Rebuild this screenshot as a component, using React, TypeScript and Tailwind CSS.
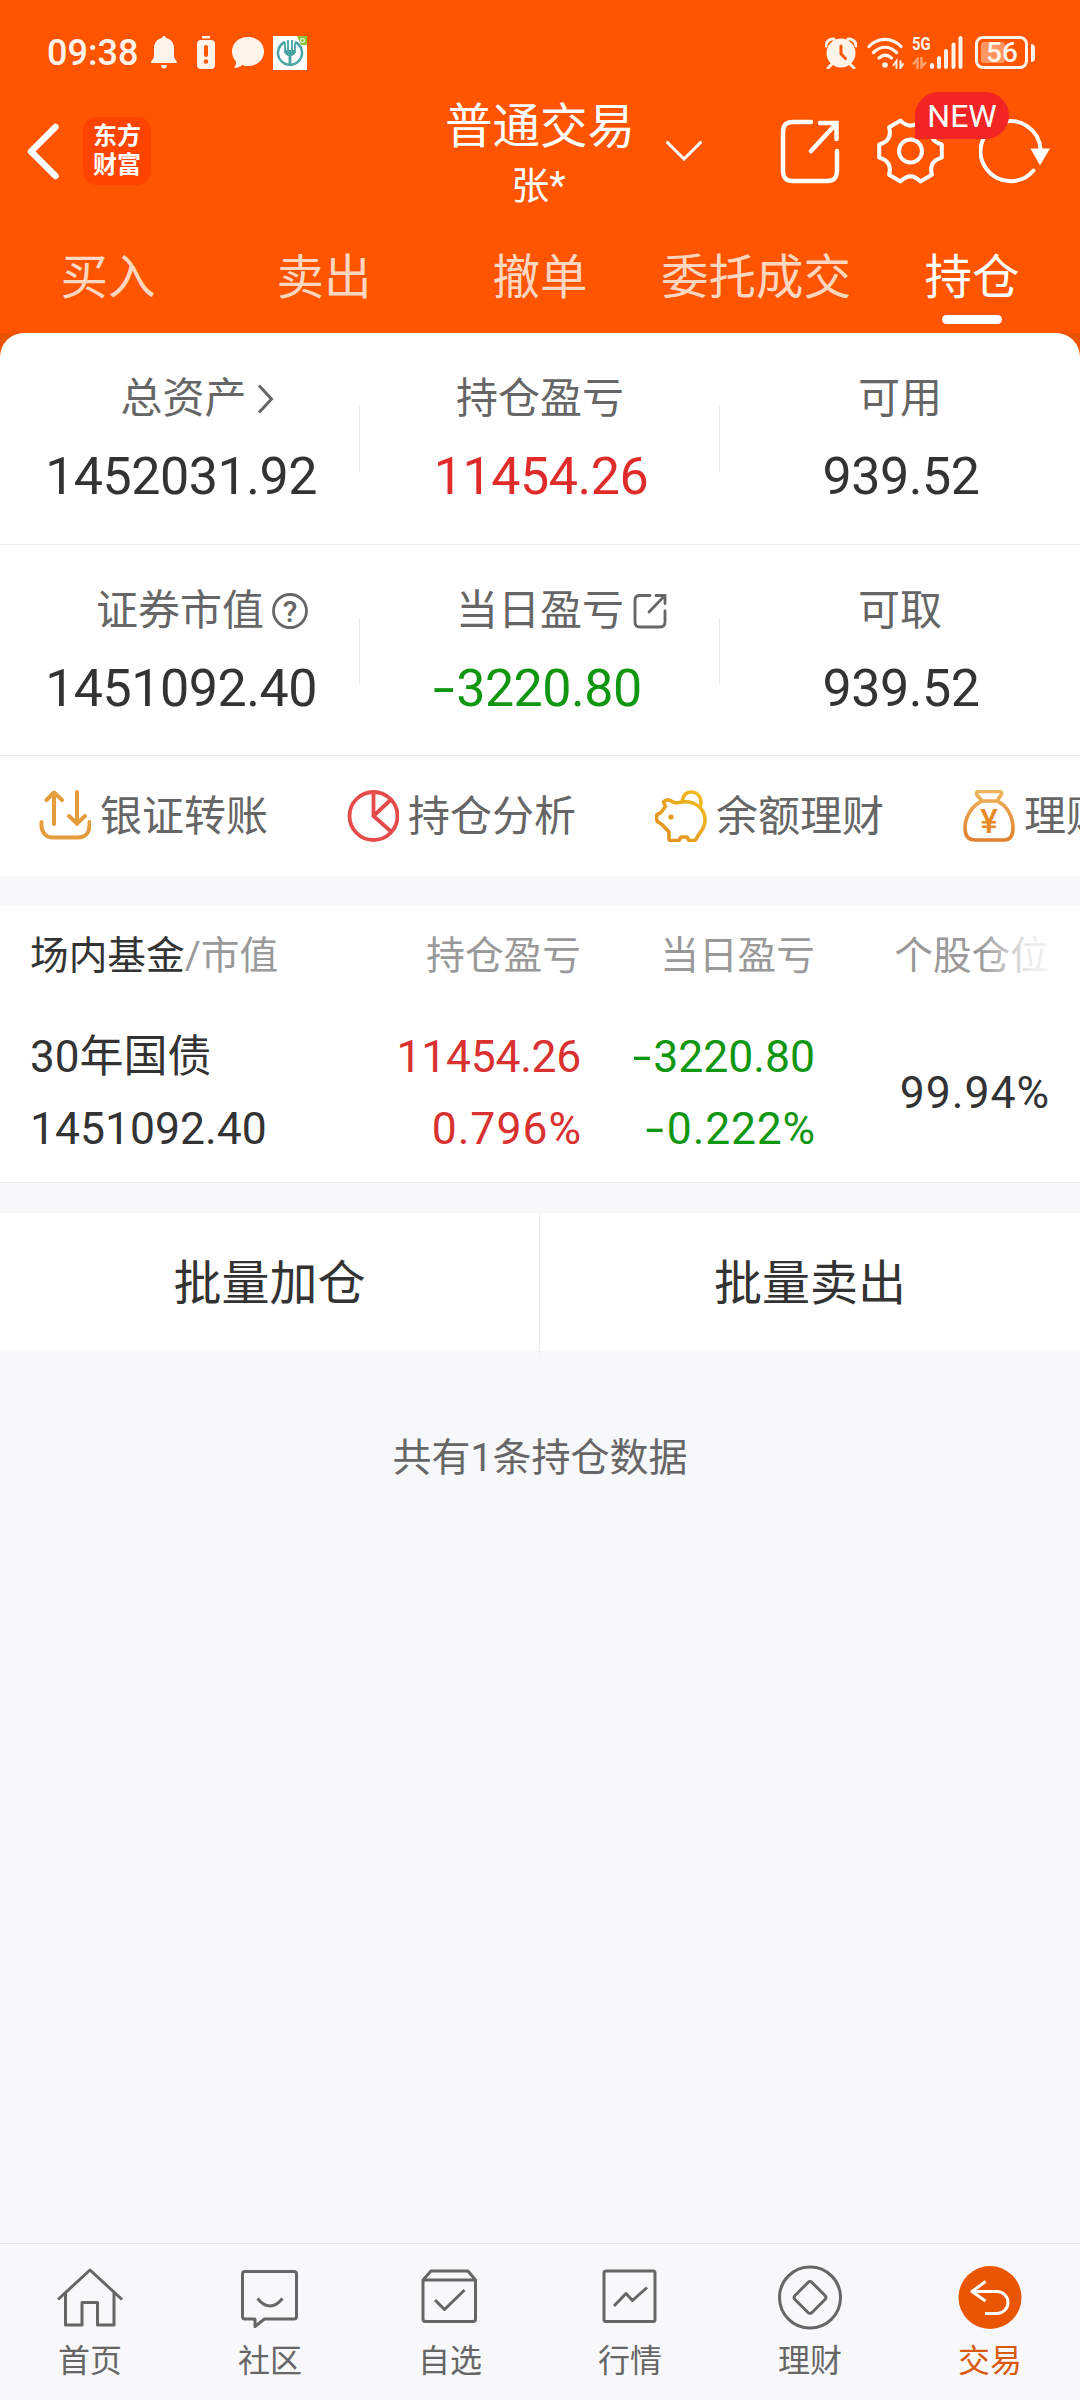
import type { ReactNode } from "react"
import clsx from "clsx"

const tabs = ["买入", "卖出", "撤单", "委托成交", "持仓"]

// 负数的减号单独拉宽
function Num({ value }: { value: string }) {
  if (!value.startsWith("-")) return <>{value}</>
  return (
    <>
      <span className="mr-[2px] inline-block origin-right scale-x-150">-</span>
      {value.slice(1)}
    </>
  )
}

function StatusBar() {
  return (
    <div className="flex h-[92px] items-center pl-[47px] pr-[45px] pt-[13px] text-[#fff3ea]">
      <span className="w-[104px] text-[36px] font-medium leading-none">09:38</span>
      <svg width="26" height="33" viewBox="0 0 26 33" fill="currentColor">
        <path d="M13 0c1.500 0 2 1 2 2 5 1 8 5 8 10v8c0 3 3 4 3 7H0c0-3 3-4 3-7v-8C3 7 6 3 11 2c0-1 .5-2 2-2zM10 29h6c0 2-1 3.500-3 3.500S10 31 10 29z" />
      </svg>
      <svg className="ml-[20px]" width="18" height="33" viewBox="0 0 18 33">
        <path fill="currentColor" d="M5 0h8v2.500H5zM4 4h10a4 4 0 0 1 4 4v21a4 4 0 0 1-4 4H4a4 4 0 0 1-4-4V8a4 4 0 0 1 4-4z" />
        <path d="M9 11v8" stroke="#ff5500" strokeWidth="4" strokeLinecap="round" />
        <circle cx="9" cy="25.500" r="2.200" fill="#ff5500" />
      </svg>
      <svg className="ml-[17px]" width="32" height="31" viewBox="0 0 32 31" fill="currentColor">
        <path d="M16 0c9 0 16 6 16 14.500S25 29 16 29c-2 0-4 0-5.500-1C8 30 5 31 2 31c1.500-2 2-4 2-6.500C1.500 22 0 18.500 0 14.500 0 6 7 0 16 0z" />
      </svg>
      <svg className="ml-[9px]" width="34" height="34" viewBox="0 0 34 34">
        <rect width="34" height="34" fill="#fff" />
        <path d="M24 0h10v9h-6z" fill="#8cc63f" />
        <circle cx="29.500" cy="4.500" r="2" fill="none" stroke="#fff" />
        <path d="M12 6A12 12 0 1 0 22 6" fill="none" stroke="#4aa5a5" strokeWidth="2.500" />
        <path d="M12 7v10M22 7v10M15 4v11M19 4v11" fill="none" stroke="#4aa5a5" strokeWidth="1.800" />
        <path d="M12 14h10v4l-3 2h-4l-3-2zM15.500 20h3v9h-3z" fill="#4aa5a5" />
      </svg>

      <div className="ml-auto flex items-center">
        <svg width="32" height="32" viewBox="0 0 32 32">
          <path d="M1 9a7 7 0 0 1 8-7M31 9a7 7 0 0 0-8-7M7 27l-4 4M25 27l4 4" stroke="currentColor" strokeWidth="3" fill="none" strokeLinecap="round" />
          <circle cx="16" cy="16" r="14.500" fill="currentColor" />
          <path d="M16 9v8l4.500 4.500" stroke="#ff5500" strokeWidth="3" fill="none" strokeLinecap="round" />
        </svg>
        <svg className="ml-[10px]" width="37" height="32" viewBox="0 0 37 32" fill="none" stroke="currentColor" strokeWidth="3.200" strokeLinecap="round">
          <path d="M2 9.500c9-9.500 23-9.500 32 0M6.500 15.500c7-7 16-7 23 0M12 21c4-3.500 8.500-3.500 12.500 0" />
          <circle cx="18" cy="28" r="2.800" fill="currentColor" stroke="none" />
          <path d="M29.500 31v-7l-3 4M33.500 24v7l2.500-4" strokeWidth="2" />
        </svg>
        <div className="ml-[8px] flex h-[33px] w-[18px] flex-col justify-between">
          <span className="origin-left scale-x-[.78] text-[19px] font-bold leading-[16px]">5G</span>
          <svg width="15" height="12" viewBox="0 0 15 12" fill="none" stroke="#ff9f6e" strokeWidth="2.500">
            <path d="M5.500 12V2L1 7.500M9.500 0v10l4.500-5" />
          </svg>
        </div>
        <svg width="33" height="33" viewBox="0 0 33 33" stroke="currentColor" strokeWidth="4" strokeLinecap="round">
          <path d="M2 29v2M9 22v9M16 15v16M23.500 8.500V31M30.500 2v29" />
        </svg>
        <div className="ml-[12px] flex h-[33px] w-[53px] items-center rounded-[8px] border-[3px] border-current p-[3px]">
          <div className="flex h-full w-[24px] items-center justify-start rounded-[3px] bg-[#ff9560] pl-[5px]">
            <span className="text-[28px] font-medium leading-none">56</span>
          </div>
        </div>
        <div className="ml-[3px] h-[18px] w-[4px] rounded-r bg-current" />
      </div>
    </div>
  )
}

function Header() {
  return (
    <div className="flex h-[118px] items-center text-white">
      <div className="flex w-[445px] items-center pl-[27px]">
        <svg width="32" height="57" viewBox="0 0 32 57" fill="none" stroke="currentColor" strokeWidth="6.500" strokeLinecap="round" strokeLinejoin="round">
          <path d="M28.500 4L4 28.500 28.500 53" />
        </svg>
        <div className="ml-[24px] flex h-[68px] w-[68px] flex-col items-center justify-center rounded-[14px] bg-[#ff4400] text-[24px] font-bold leading-[29px]">
          <span>东方</span>
          <span>财富</span>
        </div>
      </div>
      <div className="w-[187px] pt-[3px] text-center">
        <div className="whitespace-nowrap text-[47.500px] leading-[66px]">普通交易</div>
        <div className="text-[38px] leading-[52px]">张*</div>
      </div>
      <svg className="ml-[34px]" width="36" height="20" viewBox="0 0 36 20" fill="none" stroke="currentColor" strokeWidth="3" strokeLinecap="round">
        <path d="M1.500 1.500L18 18 34.500 1.500" />
      </svg>
      <svg className="ml-[78px]" width="60" height="65" viewBox="0 0 60 65" fill="none" stroke="currentColor" strokeWidth="4.500" strokeLinecap="round">
        <path d="M31 3H13C6 3 3 6 3 13v38c0 8 3 11 10 11h34c7 0 10-3 10-11V32M31 32L56 5M40 4h16.500v16" />
      </svg>
      <div className="relative ml-[37px]">
        <svg width="67" height="66" viewBox="-33.500 -33 67 66" fill="none" stroke="currentColor" strokeWidth="4" strokeLinejoin="round">
          <path d="M31.300-6.600V6.600Q17.800 10.300 21.400 23.800L9.900 30.400Q0 20.500-9.900 30.400L-21.400 23.800Q-17.800 10.300-31.300 6.600V-6.600Q-17.800-10.300-21.400-23.800L-9.900-30.400Q0-20.500 9.900-30.400L21.400-23.800Q17.800-10.300 31.300-6.600Z" />
          <circle r="11.500" />
        </svg>
        <span className="absolute left-[38px] top-[-26px] z-10 flex h-[47px] w-[94px] items-center justify-center rounded-full rounded-bl-none bg-[#f22424] text-[32px] leading-none">
          NEW
        </span>
      </div>
      <svg className="ml-[35px]" width="72" height="66" viewBox="0 0 72 66">
        <path d="M54.500 52.500A30 30 0 1 1 61.500 31" fill="none" stroke="currentColor" strokeWidth="4" strokeLinecap="round" />
        <path d="M51.500 30.500h19.500L61 47.500z" fill="currentColor" />
      </svg>
    </div>
  )
}

function Tabs() {
  return (
    <div className="grid h-[123px] grid-cols-5 pt-[32px]">
      {tabs.map((tab) => {
        const active = tab === "持仓"
        return (
          <div key={tab} className={clsx("flex flex-col items-center text-[47.500px] leading-[72px]", active ? "text-white" : "text-[#ffd6c0]")}>
            {tab}
            {active && <div className="mt-px h-[9px] w-[60px] rounded-full bg-white" />}
          </div>
        )
      })}
    </div>
  )
}

type CellProps = { label: string; value: string; color?: string; icon?: ReactNode; last?: boolean }

function Cell({ label, value, color = "text-[#333]", icon, last }: CellProps) {
  return (
    <div className="relative flex h-full flex-col items-center pt-[36px]">
      <div className={clsx("flex h-[60px] items-center text-[42px] leading-[60px] text-[#666]", label === "总资产" && "pl-[7px]")}>
        {label}
        {icon && <span className="flex w-0">{icon}</span>}
      </div>
      <div className={clsx("mt-[12px] pl-[2px] text-[52px] leading-[72px] tracking-[-0.500px]", color)}>
        <Num value={value} />
      </div>
      {!last && <div className="absolute right-0 top-[73px] h-[66px] w-px bg-[#eaeaea]" />}
    </div>
  )
}

const arrowIcon = (
  <svg className="ml-[10px] shrink-0" width="17" height="30" viewBox="0 0 17 30" fill="none" stroke="#666" strokeWidth="3">
    <path d="M2 1.500L14.500 15 2 28.500" />
  </svg>
)

const helpIcon = (
  <svg className="ml-[7px] shrink-0" width="38" height="38" viewBox="0 0 38 38">
    <circle cx="19" cy="19" r="16.500" fill="none" stroke="#666" strokeWidth="2.800" />
    <text x="19" y="29.500" textAnchor="middle" fontSize="30" fontWeight="500" fill="#666">?</text>
  </svg>
)

const openIcon = (
  <svg className="ml-[9px] shrink-0" width="34" height="36" viewBox="0 0 34 36" fill="none" stroke="#666" strokeWidth="2.800" strokeLinecap="round">
    <path d="M17 2.500H7C3.500 2.500 2 4 2 7v22c0 3.500 1.500 5 5 5h20c3.500 0 5-1.500 5-5V18M16 19L31 3.500M23 2.500h9v8" />
  </svg>
)

function Summary() {
  return (
    <div className="bg-[#e95200]">
      <div className="rounded-t-[24px] bg-white">
        <div className="grid h-[212px] grid-cols-3 border-b border-[#ebebeb]">
          <Cell label="总资产" value="1452031.92" icon={arrowIcon} />
          <Cell label="持仓盈亏" value="11454.26" color="text-[#e02b2b]" />
          <Cell label="可用" value="939.52" last />
        </div>
        <div className="grid h-[211px] grid-cols-3 border-b border-[#ebebeb]">
          <Cell label="证券市值" value="1451092.40" icon={helpIcon} />
          <Cell label="当日盈亏" value="-3220.80" color="text-[#119611]" icon={openIcon} />
          <Cell label="可取" value="939.52" last />
        </div>
      </div>
    </div>
  )
}

const actions = [
  {
    label: "银证转账",
    icon: (
      <g stroke="#e59c3c" strokeWidth="4">
        <path d="M2.500 32v3c0 8 5 12.500 11 12.500h26c7 0 11-5 11-12.500v-3M15 34V3M7.500 10L15 2.500l8 7.500M38 2v32M30 26l8 7.500 8-7.500" />
      </g>
    ),
  },
  {
    label: "持仓分析",
    icon: (
      <g stroke="#e64a4a" strokeWidth="3.800">
        <circle cx="26.500" cy="26" r="24" />
        <path d="M26.500 2v24L44 9.500M26.500 26L44 41.500" />
      </g>
    ),
  },
  {
    label: "余额理财",
    icon: (
      <g stroke="url(#gold)" strokeWidth="3.600">
        <path d="M18 12q4 1.500 9 0C40 10 50 19 50 30c0 10-6 12-8.500 18.500-.5 1.500-1.500 2-3 2H34L32 47h-6l-2 3.500h-8c-1.500 0-2-.5-2-2V42L7 34.500 3 32c-1-1-1.500-2-1.500-3.500V26c0-2 2-2.500 4-3l5-6.500L8.500 12C11 9 15 10 18 12zM27 11.500C28 5.500 31 2 36 2c7 0 11.500 6 9.500 14" />
        <circle cx="16" cy="27" r="2.600" fill="#e89a20" stroke="none" />
      </g>
    ),
  },
  {
    label: "理财",
    icon: (
      <g stroke="url(#amber)" strokeWidth="3.600">
        <path d="M19 11C8 16 2 28 2 38c0 8 3 12 10 12h29c6 0 9-4 9-12 0-11-6-23-16-27zl-5-6c-1-2-.5-3.500 1.500-3.500h21c2 0 2.500 1.500 1.500 3.500l-4 6" />
        <text x="26" y="43" textAnchor="middle" fontSize="33" fontWeight="500" fill="#e88a28" stroke="none">¥</text>
      </g>
    ),
  },
]

function Actions() {
  return (
    <div className="flex h-[120px] items-center overflow-hidden bg-white pl-[39px]">
      {actions.map((a) => (
        <div key={a.label} className="flex w-[308px] shrink-0 items-center gap-[9px] whitespace-nowrap text-[42px] leading-[60px] text-[#666]">
          <svg width="52" height="52" viewBox="0 0 52 52" fill="none" strokeLinecap="round" strokeLinejoin="round">
            <defs>
              <linearGradient id="gold" x1="1" y1="0" x2="0" y2="1">
                <stop stopColor="#f0c020" />
                <stop offset="1" stopColor="#e08a20" />
              </linearGradient>
              <linearGradient id="amber" x1="0" y1="0" x2="0" y2="1">
                <stop stopColor="#eeb45a" />
                <stop offset="1" stopColor="#e08030" />
              </linearGradient>
            </defs>
            {a.icon}
          </svg>
          <span className="pt-[2px]">{a.label}</span>
        </div>
      ))}
    </div>
  )
}

function Holdings() {
  return (
    <div className="mt-[30px] h-[277px] border-b border-[#e8e9eb] bg-white px-[31px]">
      <div className="relative grid h-[115px] grid-cols-[315px_235px_234px_234px] pt-px text-right text-[38.700px] leading-[98px] text-[#999]">
        <div className="-ml-px text-left">
          <span className="text-[#333]">场内基金</span>/市值
        </div>
        <div>持仓盈亏</div>
        <div>当日盈亏</div>
        <div>个股仓位</div>
        <div className="absolute -right-[31px] top-0 h-full w-[100px] bg-linear-to-r from-white/0 via-white/80 via-50% to-white" />
      </div>
      <div className="grid grid-cols-[315px_235px_234px_234px] items-center text-right text-[44.500px] leading-[72px] text-[#333]">
        <div className="-ml-px text-left">
          <div className="text-[44px]">30年国债</div>
          <div>1451092.40</div>
        </div>
        <div className="text-[#d93030]">
          <div className="tracking-[-0.300px]">11454.26</div>
          <div className="-mr-px tracking-[1px]">0.796%</div>
        </div>
        <div className="text-[#119611]">
          <div><Num value="-3220.80" /></div>
          <div className="-mr-px tracking-[0.800px]"><Num value="-0.222%" /></div>
        </div>
        <div className="-mr-px tracking-[1px]">99.94%</div>
      </div>
    </div>
  )
}

const navItems = [
  { label: "首页", icon: <path d="M1 34.500L33 5l32 29.500M8.500 28v32H25V37.500h15.500V60H57V28" /> },
  { label: "社区", icon: <path d="M8 6.500h49q2.500 0 2.500 2.500v42.500q0 2.500-2.500 2.500H27.500L18 61.500V54H8q-2.500 0-2.500-2.500V9q0-2.500 2.500-2.500zM20.500 33.500q12.500 15 25 0" /> },
  { label: "自选", icon: <path d="M6 15L14 6h37l7.500 9v39q0 2.500-2.500 2.500H8.500Q6 56.500 6 54zh52.500M18 35l9.500 9.500L47.500 25" /> },
  { label: "行情", icon: <path d="M9 6h47q2 0 2 2v46.500q0 2-2 2H9q-2 0-2-2V8q0-2 2-2zM17 41l12-12.500 6.500 7L50 22.500" /> },
  {
    label: "理财",
    icon: (
      <>
        <circle cx="33" cy="32.500" r="30.500" />
        <path d="M31 17.500q2-2 4 0l13 13q2 2 0 4l-13 13q-2 2-4 0l-13-13q-2-2 0-4z" />
      </>
    ),
  },
  {
    label: "交易",
    icon: (
      <>
        <circle cx="33" cy="32.500" r="31.500" fill="#ea5504" stroke="none" />
        <path stroke="#fff" d="M28.500 16.500L15 26.500l13.500 9.500M15 26.500h25a11 11 0 0 1 0 22H28" />
      </>
    ),
  },
]

function BottomNav() {
  return (
    <div className="mt-auto grid h-[157px] grid-cols-6 border-t border-[#dfdfe1] bg-[#f8f8fa] pt-[21px]">
      {navItems.map((item) => (
        <div key={item.label} className={clsx("flex flex-col items-center text-[32px] leading-[46px]", item.label === "交易" ? "text-[#d9590f]" : "text-[#666]")}>
          <svg width="66" height="66" viewBox="0 0 66 66" fill="none" stroke="currentColor" strokeWidth="3" strokeLinejoin="round">
            {item.icon}
          </svg>
          <span className="mt-[7px]">{item.label}</span>
        </div>
      ))}
    </div>
  )
}

export default function App() {
  return (
    <div className="flex h-[2400px] w-[1080px] flex-col overflow-hidden bg-[#f7f8fa] font-[Roboto,'Noto_Sans_CJK_SC',sans-serif]">
      <div className="bg-[#ff5500]">
        <StatusBar />
        <Header />
        <Tabs />
      </div>
      <Summary />
      <Actions />
      <Holdings />
      <div className="mt-[30px] grid h-[138px] grid-cols-2 bg-white text-center text-[48px] leading-[142px] text-[#333]">
        <div className="border-r border-[#f0f0f2]">批量加仓</div>
        <div>批量卖出</div>
      </div>
      <div className="mt-[77px] text-center text-[39px] leading-[60px] text-[#666]">共有1条持仓数据</div>
      <BottomNav />
    </div>
  )
}
